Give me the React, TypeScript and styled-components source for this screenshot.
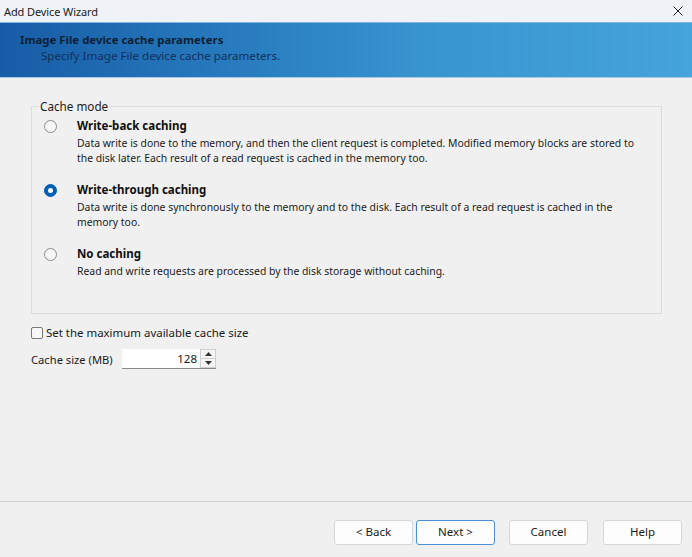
import React from "react";
import styled, { createGlobalStyle } from "styled-components";

const Global = createGlobalStyle`
  html, body { margin: 0; padding: 0; background: #f0f0f0; }
  body { font-family: "Noto Sans", "Open Sans", sans-serif; color: #000; }
  * { box-sizing: border-box; }
`;

const Window = styled.div`
  width: 692px;
  height: 557px;
  display: flex;
  flex-direction: column;
  background: #f0f0f0;
  overflow: hidden;
`;

const TitleBar = styled.div`
  height: 22px;
  flex: none;
  background: #eff3f8;
  display: flex;
  align-items: center;
  justify-content: space-between;
  padding: 0 6px 0 4px;
  font-size: 11px;
  letter-spacing: -0.1px;
  color: #1b1b1b;
`;

const CloseIcon = styled.svg`
  width: 10px;
  height: 10px;
  margin-right: 3px;
`;

const Banner = styled.div`
  height: 56px;
  flex: none;
  background: linear-gradient(90deg, #175ca6 0%, #2a7fc1 38%, #3995d0 62%, #45a4da 100%);
  border-top: 1px solid #86b4e0;
  border-bottom: 1px solid #a7c8e4;
  padding: 9px 0 0 20px;
  display: flex;
  flex-direction: column;
`;

const BannerTitle = styled.div`
  font-size: 11.4px;
  font-weight: 700;
  color: #0d1f35;
  line-height: 16px;
`;

const BannerSub = styled.div`
  font-size: 11.6px;
  color: #12305a;
  padding-left: 21px;
  line-height: 16px;
`;

const Body = styled.div`
  flex: 1;
  padding: 21px 30px 0 31px;
  display: flex;
  flex-direction: column;
`;

const Group = styled.fieldset`
  margin: 0;
  padding: 0 20px 0 7px;
  border: 1px solid #dcdcdc;
  border-radius: 0;
  height: 215px;
  width: 631px;
`;

const Legend = styled.legend`
  font-size: 11.7px;
  color: #1b1b1b;
  padding: 0 1px;
  margin-left: 0;
  line-height: 14px;
`;

const Option = styled.div`
  display: flex;
  align-items: flex-start;
  margin-bottom: 16px;
  &:first-of-type { margin-top: 5px; }
`;

const Radio = styled.div<{ $checked?: boolean }>`
  flex: none;
  width: 13px;
  height: 13px;
  border-radius: 50%;
  margin: 2px 20px 0 5px;
  border: 1px solid ${p => (p.$checked ? "#005fb8" : "#8a8a8a")};
  background: ${p => (p.$checked ? "#005fb8" : "#f6f6f6")};
  display: flex;
  align-items: center;
  justify-content: center;
  &::after {
    content: "";
    display: ${p => (p.$checked ? "block" : "none")};
    width: 5px;
    height: 5px;
    border-radius: 50%;
    background: #fff;
  }
`;

const OptionText = styled.div`
  display: flex;
  flex-direction: column;
`;

const OptionTitle = styled.div`
  font-size: 11.5px;
  font-weight: 700;
  line-height: 16px;
  color: #111;
`;

const OptionDesc = styled.div`
  font-size: 10.4px;
  line-height: 15px;
  color: #1b1b1b;
  margin-top: 2px;
  white-space: nowrap;
`;

const CheckRow = styled.label`
  display: flex;
  align-items: center;
  margin-top: 11px;
  font-size: 11.45px;
  color: #1b1b1b;
  line-height: 16px;
`;

const CheckBox = styled.span`
  width: 12px;
  height: 12px;
  border: 1px solid #7a7a7a;
  border-radius: 2px;
  background: #f7f7f7;
  margin-right: 3px;
`;

const SizeRow = styled.div`
  display: flex;
  align-items: center;
  margin-top: 8px;
  font-size: 11.2px;
  color: #1b1b1b;
`;

const SizeLabel = styled.span`
  width: 91px;
`;

const Spin = styled.div`
  display: flex;
  height: 20px;
  border-bottom: 1px solid #8a8a8a;
`;

const SpinInput = styled.div`
  width: 78px;
  background: #fff;
  text-align: right;
  padding-right: 3px;
  line-height: 19px;
  font-size: 11.5px;
`;

const SpinButtons = styled.div`
  width: 16px;
  display: flex;
  flex-direction: column;
  background: #f5f5f5;
  border: 1px solid #d0d0d0;
  border-bottom: none;
`;

const SpinBtn = styled.div`
  flex: 1;
  display: flex;
  align-items: center;
  justify-content: center;
  border-bottom: 1px solid #d0d0d0;
`;

const Footer = styled.div`
  flex: none;
  height: 56px;
  border-top: 1px solid #cfcfcf;
  display: flex;
  align-items: flex-start;
  padding: 18px 0 0 334px;
`;

const Button = styled.div<{ $focus?: boolean; $gap?: number }>`
  width: 79px;
  height: 25px;
  background: #fdfdfd;
  border: 1px solid ${p => (p.$focus ? "#4a8fd6" : "#d6d6d6")};
  border-radius: 3px;
  display: flex;
  align-items: center;
  justify-content: center;
  font-size: 11.5px;
  line-height: 14px;
  padding-bottom: 1px;
  color: #1b1b1b;
  margin-left: ${p => p.$gap ?? 0}px;
`;

const options = [
  {
    title: "Write-back caching",
    desc: [
      "Data write is done to the memory, and then the client request is completed. Modified memory blocks are stored to",
      "the disk later. Each result of a read request is cached in the memory too.",
    ],
    checked: false,
  },
  {
    title: "Write-through caching",
    desc: [
      "Data write is done synchronously to the memory and to the disk. Each result of a read request is cached in the",
      "memory too.",
    ],
    checked: true,
  },
  {
    title: "No caching",
    desc: ["Read and write requests are processed by the disk storage without caching."],
    checked: false,
  },
];

export default function App() {
  return (
    <Window>
      <Global />
      <TitleBar>
        <span>Add Device Wizard</span>
        <CloseIcon viewBox="0 0 10 10">
          <path d="M0.5 0.5 L9.5 9.5 M9.5 0.5 L0.5 9.5" stroke="#222" strokeWidth="1" />
        </CloseIcon>
      </TitleBar>
      <Banner>
        <BannerTitle>Image File device cache parameters</BannerTitle>
        <BannerSub>Specify Image File device cache parameters.</BannerSub>
      </Banner>
      <Body>
        <Group>
          <Legend>Cache mode</Legend>
          {options.map(o => (
            <Option key={o.title}>
              <Radio $checked={o.checked} />
              <OptionText>
                <OptionTitle>{o.title}</OptionTitle>
                <OptionDesc>
                  {o.desc.map(d => (
                    <div key={d}>{d}</div>
                  ))}
                </OptionDesc>
              </OptionText>
            </Option>
          ))}
        </Group>
        <CheckRow>
          <CheckBox />
          Set the maximum available cache size
        </CheckRow>
        <SizeRow>
          <SizeLabel>Cache size (MB)</SizeLabel>
          <Spin>
            <SpinInput>128</SpinInput>
            <SpinButtons>
              <SpinBtn>
                <svg width="7" height="4" viewBox="0 0 7 4"><path d="M0 4 L3.5 0 L7 4Z" fill="#333" /></svg>
              </SpinBtn>
              <SpinBtn>
                <svg width="7" height="4" viewBox="0 0 7 4"><path d="M0 0 L3.5 4 L7 0Z" fill="#333" /></svg>
              </SpinBtn>
            </SpinButtons>
          </Spin>
        </SizeRow>
      </Body>
      <Footer>
        <Button>&lt; Back</Button>
        <Button $focus $gap={3}>Next &gt;</Button>
        <Button $gap={14}>Cancel</Button>
        <Button $gap={15}>Help</Button>
      </Footer>
    </Window>
  );
}
